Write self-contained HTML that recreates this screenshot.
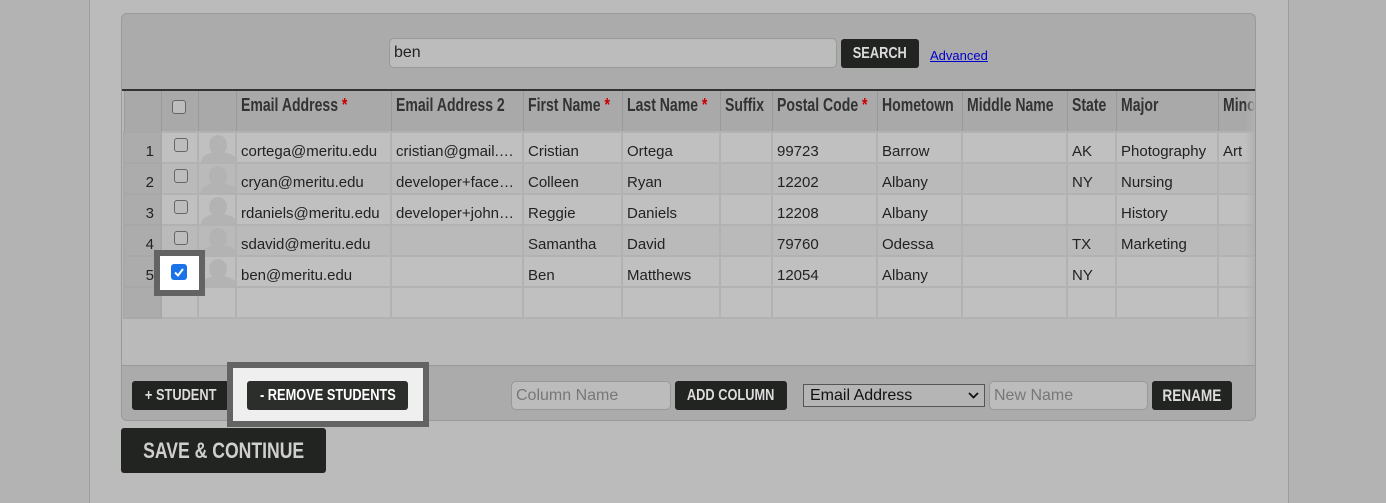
<!DOCTYPE html>
<html><head><style>
*{box-sizing:border-box;margin:0;padding:0}
body{width:1386px;height:503px;background:#b3b3b3;font-family:"Liberation Sans",sans-serif;position:relative;overflow:hidden}
#main{position:absolute;left:89px;top:0;width:1200px;height:503px;background:#bbbbbb;border-left:1px solid #9d9d9d;border-right:1px solid #9d9d9d}
#panel{position:absolute;left:121px;top:13px;width:1135px;height:408px;background:#ababab;border:1px solid #999;border-radius:6px;overflow:hidden}
.btn{position:absolute;background:#222421;color:#dcdcdc;font-weight:bold;font-size:16px;text-align:center;border-radius:3px;white-space:nowrap;display:flex;justify-content:center;align-items:center}
.btn s{text-decoration:none;display:inline-block;transform:scaleX(.8);transform-origin:center;flex:none}
.inp{position:absolute;background:#bcbcbc;border:1px solid #999;border-radius:5px;font-size:16px;color:#777;padding-left:4px}
#grid{position:absolute;left:0;top:75px;width:1133px;height:276px;background:#bababa;border-top:2px solid #333;overflow:hidden}
table{position:absolute;left:1px;top:0;border-collapse:collapse;table-layout:fixed;width:1193px}
th{height:41px;background:#a9a9a9;border:1px solid #999;border-top:none;text-align:left;font-weight:bold;font-size:18px;color:#333;padding:0 4px;vertical-align:top;padding-top:4px;white-space:nowrap;overflow:hidden}
th s{text-decoration:none;display:inline-block;transform:scaleX(.78);transform-origin:left}
th span{color:#c00}
td{height:31px;background:#c0c0c0;border:2px solid #b2b2b2;font-size:15px;color:#222;padding:7px 4px 0 4px;white-space:nowrap;overflow:hidden;text-overflow:ellipsis}
tr.d td{background:#bababa}
td.n{background:#acacac!important;text-align:right;padding-right:6px;border-color:#a8a8a8}
tr:first-child td{border-top:3px solid #aaa}
.cb{display:inline-block;width:14px;height:14px;border:1px solid #666;border-radius:3px;background:#bdbdbd;margin-left:8px;margin-top:-5px;vertical-align:top}
.av{position:relative;overflow:hidden;padding:0}
.av i{position:absolute;left:10px;top:2px;width:18px;height:20px;border-radius:50%;background:#b3b3b3}
.av b{position:absolute;left:2px;top:19px;width:36px;height:18px;border-radius:50% 50% 0 0;background:#b3b3b3}
</style></head><body>
<div id="main"></div>
<div id="panel">
 <div class="inp" style="left:267px;top:24px;width:448px;height:30px;color:#222;padding-top:5px">ben</div>
 <div class="btn" style="left:719px;top:25px;width:78px;height:29px"><s>SEARCH</s></div>
 <a style="position:absolute;left:808px;top:34px;font-size:13px;color:#00c;text-decoration:underline">Advanced</a>
 <div id="grid">
  <table>
   <colgroup><col style="width:37px"><col style="width:37px"><col style="width:38px"><col style="width:155px"><col style="width:132px"><col style="width:99px"><col style="width:98px"><col style="width:52px"><col style="width:105px"><col style="width:85px"><col style="width:105px"><col style="width:49px"><col style="width:102px"><col style="width:99px"></colgroup>
   <tr><th></th><th><span class="cb" style="margin-left:6px;margin-top:5px"></span></th><th></th><th><s>Email Address <span>*</span></s></th><th><s>Email Address 2</s></th><th><s>First Name <span>*</span></s></th><th><s>Last Name <span>*</span></s></th><th><s>Suffix</s></th><th><s>Postal Code <span>*</span></s></th><th><s>Hometown</s></th><th><s>Middle Name</s></th><th><s>State</s></th><th><s>Major</s></th><th><s>Minor</s></th></tr>
   <tr><td class="n">1</td><td><span class="cb"></span></td><td class="av"><i></i><b></b></td><td>cortega@meritu.edu</td><td>cristian@gmail.com</td><td>Cristian</td><td>Ortega</td><td></td><td>99723</td><td>Barrow</td><td></td><td>AK</td><td>Photography</td><td>Art</td></tr>
   <tr class="d"><td class="n">2</td><td><span class="cb"></span></td><td class="av"><i></i><b></b></td><td>cryan@meritu.edu</td><td>developer+facebook</td><td>Colleen</td><td>Ryan</td><td></td><td>12202</td><td>Albany</td><td></td><td>NY</td><td>Nursing</td><td></td></tr>
   <tr><td class="n">3</td><td><span class="cb"></span></td><td class="av"><i></i><b></b></td><td>rdaniels@meritu.edu</td><td>developer+johnson</td><td>Reggie</td><td>Daniels</td><td></td><td>12208</td><td>Albany</td><td></td><td></td><td>History</td><td></td></tr>
   <tr class="d"><td class="n">4</td><td><span class="cb"></span></td><td class="av"><i></i><b></b></td><td>sdavid@meritu.edu</td><td></td><td>Samantha</td><td>David</td><td></td><td>79760</td><td>Odessa</td><td></td><td>TX</td><td>Marketing</td><td></td></tr>
   <tr><td class="n">5</td><td></td><td class="av"><i></i><b></b></td><td>ben@meritu.edu</td><td></td><td>Ben</td><td>Matthews</td><td></td><td>12054</td><td>Albany</td><td></td><td>NY</td><td></td><td></td></tr>
   <tr><td class="n"></td><td></td><td></td><td></td><td></td><td></td><td></td><td></td><td></td><td></td><td></td><td></td><td></td><td></td></tr>
  </table>
  <div style="position:absolute;right:0;top:0;width:10px;height:276px;background:linear-gradient(to right,rgba(170,170,170,0),#b0b0b0)"></div>
 </div>
 <div style="position:absolute;left:0;top:351px;width:1133px;height:1px;background:#999"></div>
 <div class="btn" style="left:10px;top:367px;width:97px;height:29px"><s>+ STUDENT</s></div>
 <div class="inp" style="left:389px;top:367px;width:160px;height:29px;line-height:27px">Column Name</div>
 <div class="btn" style="left:553px;top:367px;width:112px;height:29px"><s>ADD COLUMN</s></div>
 <div style="position:absolute;left:681px;top:370px;width:182px;height:23px;border:1px solid #555;background:#b5b5b5;font-size:16px;color:#111;padding-left:6px;line-height:21px">Email Address<svg style="position:absolute;right:5px;top:7px" width="11" height="7" viewBox="0 0 11 7"><path d="M1 1l4.5 4.5L10 1" stroke="#111" stroke-width="1.8" fill="none"/></svg></div>
 <div class="inp" style="left:867px;top:367px;width:159px;height:29px;line-height:27px">New Name</div>
 <div class="btn" style="left:1030px;top:367px;width:80px;height:29px;font-size:17px"><s>RENAME</s></div>
</div>
<div style="position:absolute;left:154px;top:250px;width:51px;height:46px;border:6px solid #636363;background:#fff"></div>
<div style="position:absolute;left:171px;top:264px;width:16px;height:16px;background:#1a73e8;border-radius:3px"><svg width="16" height="16" viewBox="0 0 16 16"><path d="M4 8.5l3 3 5-6.5" stroke="#fff" stroke-width="2" fill="none"/></svg></div>
<div style="position:absolute;left:227px;top:362px;width:202px;height:65px;border:6px solid #636363;background:#efefef"></div>
<div class="btn" style="left:247px;top:381px;width:161px;height:29px;background:#2b2e2b;color:#fff"><s>- REMOVE STUDENTS</s></div>
<div class="btn" style="left:121px;top:428px;width:205px;height:45px;font-size:22px;color:#cfcfcf"><s>SAVE &amp; CONTINUE</s></div>
</body></html>
